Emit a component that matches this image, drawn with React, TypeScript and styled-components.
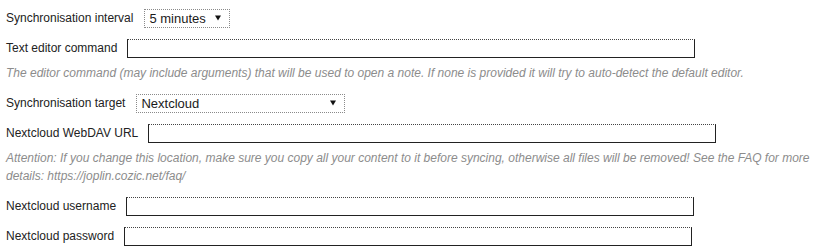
import React from 'react';
import styled, { createGlobalStyle } from 'styled-components';

const GlobalStyle = createGlobalStyle`
  html, body {
    margin: 0;
    padding: 0;
    background: #ffffff;
  }
  body {
    font-family: "Liberation Sans", Arial, sans-serif;
    font-size: 12px;
    color: #222222;
  }
`;

interface SelectSetting {
  kind: 'select';
  label: string;
  value: string;
  width: number;
  description?: string;
}
interface TextSetting {
  kind: 'text';
  label: string;
  description?: string;
}
type Setting = SelectSetting | TextSetting;

const SETTINGS: Setting[] = [
  { kind: 'select', label: 'Synchronisation interval', value: '5 minutes', width: 86 },
  {
    kind: 'text',
    label: 'Text editor command',
    description:
      'The editor command (may include arguments) that will be used to open a note. If none is provided it will try to auto-detect the default editor.',
  },
  { kind: 'select', label: 'Synchronisation target', value: 'Nextcloud', width: 209 },
  {
    kind: 'text',
    label: 'Nextcloud WebDAV URL',
    description:
      'Attention: If you change this location, make sure you copy all your content to it before syncing, otherwise all files will be removed! See the FAQ for more details: https://joplin.cozic.net/faq/',
  },
  { kind: 'text', label: 'Nextcloud username' },
  { kind: 'text', label: 'Nextcloud password' },
];

const App: React.FC = () => {
  return (
    <>
      <GlobalStyle />
      <ConfigWrapper>
        {SETTINGS.map((s) => (
          <SettingGroup key={s.label}>
            <SettingRow>
              <SettingLabel>{s.label}</SettingLabel>
              {s.kind === 'select' ? (
                <SelectBox $width={s.width}>
                  <span>{s.value}</span>
                  <svg width="6" height="6" viewBox="0 0 6 6">
                    <path d="M0 0.5 H6 L3 5.5 Z" fill="#111" />
                  </svg>
                </SelectBox>
              ) : (
                <TextInput type={s.label.includes('password') ? 'password' : 'text'} />
              )}
            </SettingRow>
            {s.description && <SettingDescription>{s.description}</SettingDescription>}
          </SettingGroup>
        ))}
      </ConfigWrapper>
    </>
  );
};

export default App;

const ConfigWrapper = styled.div`
  padding: 8px 6px 0 6px;
  width: 822px;
`;

const SettingGroup = styled.div`
  margin-bottom: 10px;
`;

const SettingRow = styled.div`
  display: flex;
  align-items: center;
  height: 20px;
`;

const SettingLabel = styled.label`
  margin-right: 10px;
  font-size: 12px;
  white-space: nowrap;
`;

const SelectBox = styled.div<{ $width: number }>`
  display: flex;
  align-items: center;
  justify-content: space-between;
  box-sizing: border-box;
  width: ${(p) => p.$width}px;
  height: 19px;
  padding: 0 8px 0 4px;
  margin-left: 1px;
  border: 1px dotted #8a8a8a;
  background: #ffffff;
  font-size: 13px;
  color: #1a1a1a;
`;

const TextInput = styled.input`
  box-sizing: border-box;
  width: 568px;
  height: 19px;
  margin: 0;
  padding: 0 3px;
  border: 1px solid #222;
  border-top: 1px dotted #444;
  background: #ffffff;
  font-family: "Liberation Sans", Arial, sans-serif;
  font-size: 12px;
  outline: none;
`;

const SettingDescription = styled.div`
  margin-top: 6px;
  font-style: italic;
  font-size: 12px;
  line-height: 18px;
  color: #8c8c8c;
  padding-bottom: 1px;
`;
